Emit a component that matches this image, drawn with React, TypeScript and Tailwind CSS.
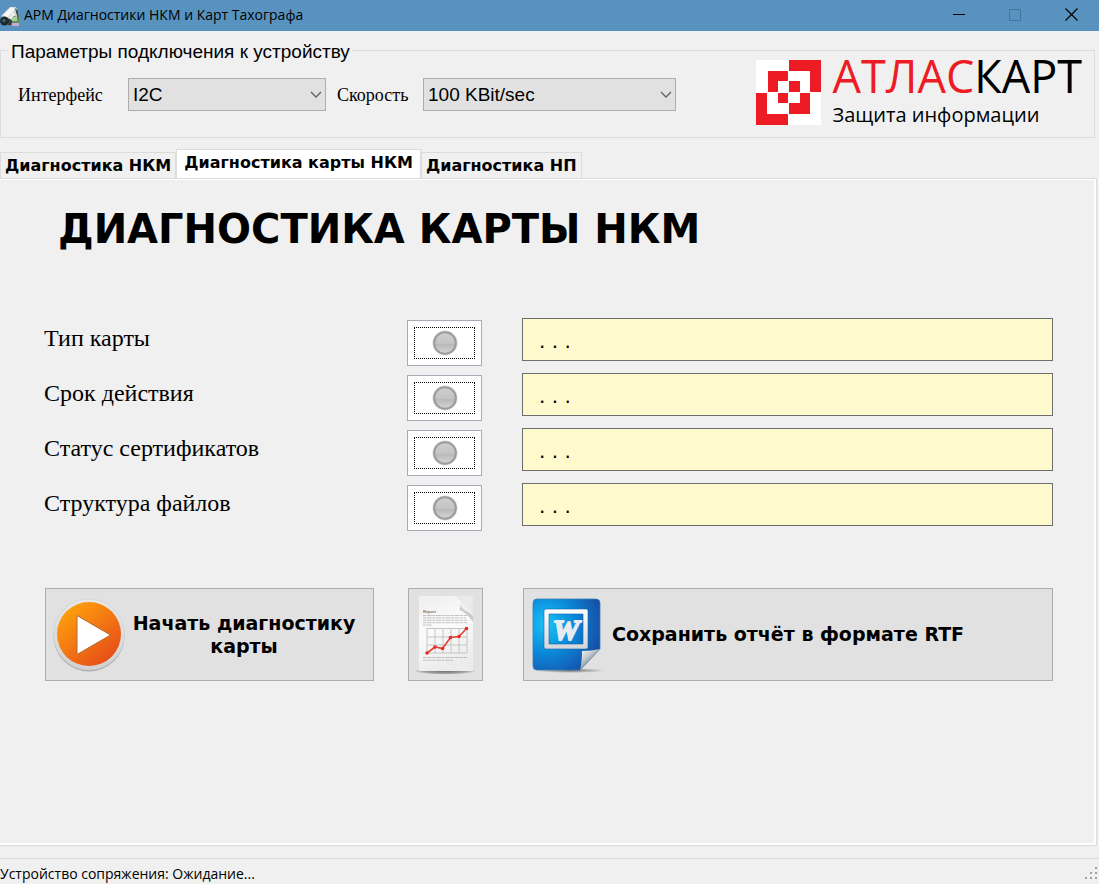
import { useState } from "react";

const tabs = ["Диагностика НКМ", "Диагностика карты НКМ", "Диагностика НП"];
const checks = ["Тип карты", "Срок действия", "Статус сертификатов", "Структура файлов"];

function AppIcon() {
  return (
    <svg width="20" height="22" viewBox="0 0 20 22" aria-hidden="true">
      <path d="M8 10 L17 8 L19 12 V22 H9 Z" fill="#5f8f5e" />
      <path d="M1 12 L10 3 L16 3 L18 8 L17 13 L11 11 L6 17 Z" fill="#cfd6d6" />
      <path d="M3 11 L11 3 L15 5 L7 14 Z" fill="#f6f6f4" />
      <path d="M8 14 L13 8 L15 10 L11 16 Z" fill="#eef0ee" />
      <path d="M15 4 L18 7 L18.500 15 L16.500 10 Z" fill="#3d4a4a" />
      <path d="M12 13 h5 v4 h-5 Z" fill="#a8cf9c" />
      <path d="M12 19 h7 v3 h-7 Z" fill="#c9a8d4" />
      <path d="M9 14 l3 3 -1 4 -3 0 Z" fill="#2d3c38" />
      <circle cx="4.500" cy="17" r="4.500" fill="#1d2a30" />
      <circle cx="4" cy="16.500" r="1.600" fill="#55666c" />
    </svg>
  );
}

function LogoMark() {
  return (
    <svg width="65" height="65" viewBox="0 0 65 65" shapeRendering="crispEdges" aria-hidden="true">
      <rect width="65" height="65" fill="#fff" />
      <g fill="#ed1c24">
        <path d="M33 0 H65 V32 H54 V11 H33 Z" />
        <path d="M12 11 H32 V21 H22 V32 H12 Z" />
        <rect x="33" y="21" width="11" height="11" />
        <rect x="22" y="33" width="10" height="10" />
        <path d="M44 33 H54 V54 H33 V43 H44 Z" />
        <path d="M0 33 H11 V54 H32 V65 H0 Z" />
      </g>
    </svg>
  );
}

function PlayIcon() {
  return (
    <svg width="74" height="74" viewBox="0 0 74 74" className="shrink-0" aria-hidden="true">
      <defs>
        <linearGradient id="playFill" x1="0.1" y1="0.05" x2="0.85" y2="0.95">
          <stop offset="0" stopColor="#ffa50c" />
          <stop offset="1" stopColor="#e64a19" />
        </linearGradient>
        <linearGradient id="playRing" x1="0" y1="0" x2="0" y2="1">
          <stop offset="0" stopColor="#e8e8e8" />
          <stop offset="1" stopColor="#d2d2d2" />
        </linearGradient>
      </defs>
      <circle cx="37" cy="38" r="35.5" fill="#aaa" />
      <circle cx="37" cy="36.5" r="35.5" fill="url(#playRing)" stroke="#cfcfcf" strokeWidth="0.6" />
      <circle cx="37" cy="36" r="32" fill="url(#playFill)" />
      <path d="M25 17.5 L58.5 37 L25 56.5 Z" fill="#fff" stroke="#b76a30" strokeWidth="1" />
    </svg>
  );
}

function ReportIcon() {
  return (
    <svg width="64" height="84" viewBox="0 0 64 84" aria-hidden="true">
      <defs>
        <linearGradient id="sheet" x1="0" y1="0" x2="0.3" y2="1">
          <stop offset="0" stopColor="#eeeeee" />
          <stop offset="0.5" stopColor="#fbfbfb" />
          <stop offset="1" stopColor="#ececec" />
        </linearGradient>
        <linearGradient id="curl" gradientUnits="userSpaceOnUse" x1="44" y1="18" x2="54" y2="9">
          <stop offset="0" stopColor="#8a8a8a" />
          <stop offset="0.35" stopColor="#d8d8d8" />
          <stop offset="0.55" stopColor="#f8f8f8" />
          <stop offset="1" stopColor="#a8a8a8" />
        </linearGradient>
        <radialGradient id="sheetShade">
          <stop offset="0" stopColor="#6f6f6f" />
          <stop offset="0.7" stopColor="#a2a2a2" />
          <stop offset="1" stopColor="#e1e1e1" />
        </radialGradient>
      </defs>
      <ellipse cx="31" cy="78" rx="31" ry="3.6" fill="url(#sheetShade)" />
      <path d="M5 3 H42 L59 22 V78 H5 Z" fill="url(#sheet)" />
      <path d="M42 3 H59 V22 Z" fill="#eaeaea" />
      <path d="M42 3 L59 23 Q53 16 46 17 Q47 9 42 3 Z" fill="url(#curl)" />
      <path d="M46 17 Q53 16 59 23 V29 Q54 21 46 17 Z" fill="#c9c9c9" />
      <text x="9" y="20" fontFamily="Liberation Sans, sans-serif" fontWeight="700" fontSize="4" fill="#777">Report</text>
      <g stroke="#8a8a8a" strokeWidth="0.9" strokeDasharray="3 0.7 5 0.6">
        <path d="M9 22.5 H53 M9 24.9 H52 M9 27.3 H53 M9 29.7 H53 M9 32.1 H18" opacity="0.55" />
        <path d="M9 64.5 H53 M9 67.2 H39" opacity="0.55" />
      </g>
      <path d="M13 35.5 H53 M13 44 H53 M13 52 H53 M13 60 H53 M13 35 V60 M21 35 V60 M29 35 V60 M37 35 V60 M45 35 V60 M53 35 V60" stroke="#c4c4c4" strokeWidth="1" fill="none" />
      <polyline points="13,60 21,54 28.5,55.5 36.5,44.5 45,43.5 52.5,35.5" fill="none" stroke="#e8413b" strokeWidth="1.7" />
      <g fill="#df302c">
        <circle cx="13" cy="60" r="1.8" />
        <circle cx="21" cy="54" r="1.8" />
        <circle cx="28.5" cy="55.5" r="1.8" />
        <circle cx="36.5" cy="44.5" r="1.8" />
        <circle cx="45" cy="43.5" r="1.8" />
        <circle cx="52.5" cy="35.5" r="1.8" />
      </g>
    </svg>
  );
}

function WordIcon() {
  return (
    <svg width="74" height="76" viewBox="0 0 74 76" className="shrink-0" aria-hidden="true">
      <defs>
        <radialGradient id="wordFill" cx="0.2" cy="0.35" r="0.95">
          <stop offset="0" stopColor="#18c4f8" />
          <stop offset="0.45" stopColor="#0b86d8" />
          <stop offset="1" stopColor="#1a3f98" />
        </radialGradient>
        <linearGradient id="wordFrame" x1="0" y1="0" x2="0" y2="1">
          <stop offset="0" stopColor="#fff" />
          <stop offset="1" stopColor="#d3d6da" />
        </linearGradient>
        <linearGradient id="wordCurl" x1="0" y1="0" x2="0.6" y2="0.7">
          <stop offset="0" stopColor="#f7f7f7" />
          <stop offset="0.55" stopColor="#c4cbd0" />
          <stop offset="1" stopColor="#6f7f88" />
        </linearGradient>
        <radialGradient id="wordShade">
          <stop offset="0" stopColor="#6f6f6f" />
          <stop offset="1" stopColor="#e1e1e1" />
        </radialGradient>
      </defs>
      <ellipse cx="38" cy="73.500" rx="35" ry="2.500" fill="url(#wordShade)" />
      <path d="M5 2 H64 Q68 2 68 6 V52 L48 73 H5 Q1 73 1 69 V6 Q1 2 5 2 Z" fill="url(#wordFill)" stroke="#3d7fb4" strokeWidth="0.8" />
      <path d="M50 54 Q60 54 68 52 L48 73 Q50 65 50 54 Z" fill="url(#wordCurl)" />
      <path fillRule="evenodd" d="M14 12 H54 Q56 12 56 14 V50 Q56 52 54 52 H14 Q12 52 12 50 V14 Q12 12 14 12 Z M17 17 V47 H51 V17 Z" fill="url(#wordFrame)" stroke="#1667a8" strokeWidth="0.6" />
      <text x="34" y="43" textAnchor="middle" fontFamily="Liberation Serif, serif" fontStyle="italic" fontWeight="700" fontSize="30" fill="#e6ebef" stroke="#e6ebef" strokeWidth="2">W</text>
    </svg>
  );
}

function StatusLamp() {
  return (
    <svg width="26" height="26" viewBox="0 0 26 26" className="shrink-0" aria-hidden="true">
      <defs>
        <linearGradient id="lamp" x1="0" y1="0" x2="0" y2="1">
          <stop offset="0" stopColor="#cfcfcf" />
          <stop offset="0.52" stopColor="#c4c4c4" />
          <stop offset="0.56" stopColor="#b8b8b8" />
          <stop offset="1" stopColor="#d6d6d6" />
        </linearGradient>
      </defs>
      <circle cx="13" cy="13" r="12.500" fill="#d8d8d8" />
      <circle cx="13" cy="13" r="10.800" fill="url(#lamp)" stroke="#9c9c9c" strokeWidth="2" />
    </svg>
  );
}

function Combo({ id, width, options }: { id: string; width: string; options: string[] }) {
  return (
    <div className={"relative " + width}>
      <select
        id={id}
        className="h-[33px] w-full appearance-none border border-[#adadad] bg-[#e1e1e1] pl-1 pr-6 pt-0.5 font-['Liberation_Sans',sans-serif] text-[19px] text-black"
      >
        {options.map((o) => (
          <option key={o}>{o}</option>
        ))}
      </select>
      <svg className="pointer-events-none absolute right-1 top-3 mt-px" width="12" height="8" viewBox="0 0 12 8" fill="none" stroke="#606060" strokeWidth="1.300" aria-hidden="true">
        <path d="M1 1 L6 6 L11 1" />
      </svg>
    </div>
  );
}

export default function App() {
  const [active, setActive] = useState(1);
  return (
    <div className="flex min-h-screen flex-col bg-[#f0f0f0] font-['Liberation_Sans',sans-serif] text-black">
      <header className="flex h-[31px] items-center bg-[#5893bf] pb-0.5">
        <AppIcon />
        <h1 className="grow pl-1 font-['Open_Sans',sans-serif] text-sm">АРМ Диагностики НКМ и Карт Тахографа</h1>
        <button aria-label="Свернуть" className="flex h-7 w-14 items-center justify-center">
          <svg width="12" height="12" viewBox="0 0 12 12" stroke="#000" shapeRendering="crispEdges"><path d="M0 5.500 H12" /></svg>
        </button>
        <button aria-label="Развернуть" disabled className="flex h-7 w-14 items-center justify-center">
          <svg width="12" height="12" viewBox="0 0 12 12" stroke="#4179a3" fill="none" shapeRendering="crispEdges"><rect x="0.500" y="0.500" width="11" height="11" /></svg>
        </button>
        <button aria-label="Закрыть" className="flex h-7 w-14 items-center justify-center">
          <svg width="13" height="13" viewBox="0 0 13 13" stroke="#000" strokeWidth="1.200"><path d="M0.500 0.500 L12.500 12.500 M12.500 0.500 L0.500 12.500" /></svg>
        </button>
      </header>

      <fieldset className="mr-1 mt-[9px] border border-[#dcdcdc]">
        <legend className="ml-2 px-0.5 pt-1 text-[19px] leading-4">Параметры подключения к устройству</legend>
        <div className="flex items-start justify-between">
          <div className="flex items-center pb-[26px] pl-[17px] pt-[18px]">
            <label htmlFor="iface" className="w-[110px] font-['Liberation_Serif',serif] text-lg">Интерфейс</label>
            <Combo id="iface" width="w-[198px]" options={["I2C"]} />
            <label htmlFor="speed" className="w-[97px] pl-[11px] font-['Liberation_Serif',serif] text-lg">Скорость</label>
            <Combo id="speed" width="w-[253px]" options={["100 KBit/sec", "400 KBit/sec"]} />
          </div>
          <div className="flex gap-3 pr-3">
            <LogoMark />
            <div className="font-['Open_Sans',sans-serif]">
              <div className="text-[45px] leading-8"><span className="text-[#ed1c24]">АТЛАС</span>КАРТ</div>
              <div className="pt-2 text-xl leading-[30px]">Защита информации</div>
            </div>
          </div>
        </div>
      </fieldset>

      <div role="tablist" className="mt-[11px] flex items-end">
        {tabs.map((t, i) => (
          <button
            key={t}
            role="tab"
            aria-selected={i === active}
            onClick={() => setActive(i)}
            className={
              i === active
                ? "h-[29px] border border-b-0 border-[#dcdcdc] bg-white px-[7px] pb-0.5 font-['DejaVu_Sans',sans-serif] text-base font-bold leading-6"
                : "h-[26px] border border-b-0 border-[#dcdcdc] px-1 font-['DejaVu_Sans',sans-serif] text-base font-bold leading-6"
            }
          >
            {t}
          </button>
        ))}
      </div>

      <main role="tabpanel" className="mr-0.5 flex grow border-b border-r border-t border-[#dcdcdc]">
        <div className="grow border-b-2 border-r-2 border-t border-white pl-11 pr-[41px]">
          <h2 className="pl-3.5 pt-6 font-['DejaVu_Sans',sans-serif] text-[40px] font-bold leading-[50px]">ДИАГНОСТИКА КАРТЫ НКМ</h2>
          <div className="mt-16 flex flex-col gap-[7px]">
            {checks.map((c, i) => (
              <div key={c} className="grid grid-cols-[363px_115px_1fr] items-start">
                <label htmlFor={"result" + i} className="pt-1.5 font-['Liberation_Serif',serif] text-2xl leading-7">{c}</label>
                <div className="pt-0.5">
                  <button aria-label={c} className="flex h-[46px] w-[75px] border border-[#a9a9b8] bg-white p-1.5">
                    <span className="flex h-full w-full items-center justify-center border border-dotted border-black"><StatusLamp /></span>
                  </button>
                </div>
                <input id={"result" + i} readOnly value=". . ." className="h-[43px] w-full border border-[#6e6e6e] bg-[#fffacd] px-4 pt-0.5 font-['DejaVu_Sans',sans-serif] text-xl" />
              </div>
            ))}
          </div>
          <div className="mt-[57px] grid grid-cols-[364px_115px_1fr] font-['DejaVu_Sans',sans-serif] text-[19px] font-bold leading-[23px]">
            <button className="ml-px flex h-[93px] w-[329px] items-center border border-[#adadad] bg-[#e1e1e1] pl-1.5">
              <PlayIcon />
              <span className="w-[236px] text-center">Начать диагностику карты</span>
            </button>
            <button aria-label="Отчёт" className="flex h-[93px] w-[75px] items-center justify-center border border-[#adadad] bg-[#e1e1e1]">
              <ReportIcon />
            </button>
            <button className="flex h-[93px] items-center gap-1.5 border border-[#adadad] bg-[#e1e1e1] pl-2">
              <WordIcon />
              <span>Сохранить отчёт в формате RTF</span>
            </button>
          </div>
        </div>
      </main>

      <footer className="mt-3 flex h-[26px] items-center justify-between border-t border-[#dcdcdc] pt-1 font-['Open_Sans',sans-serif] text-sm">
        <span>Устройство сопряжения: Ожидание...</span>
        <svg width="14" height="14" viewBox="0 0 14 14" fill="#a0a0a0" aria-hidden="true">
          <path d="M10 0 h2 v2 h-2 Z M5 5 h2 v2 h-2 Z M10 5 h2 v2 h-2 Z M0 10 h2 v2 h-2 Z M5 10 h2 v2 h-2 Z M10 10 h2 v2 h-2 Z" />
        </svg>
      </footer>
    </div>
  );
}
